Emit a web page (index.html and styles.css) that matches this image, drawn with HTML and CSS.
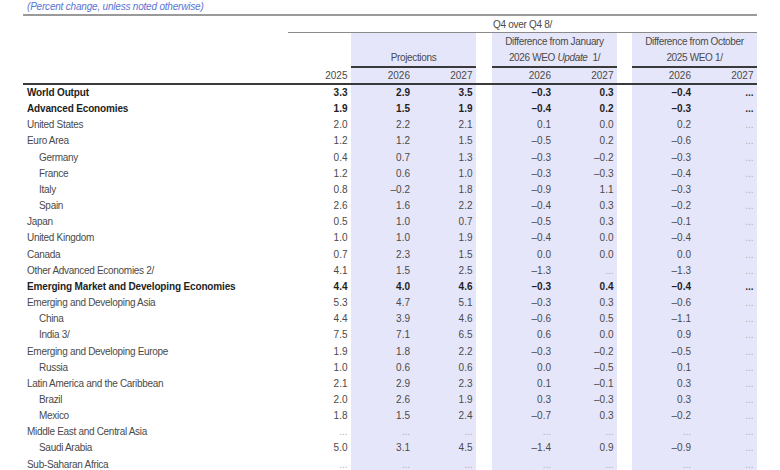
FILE: index.html
```html
<!DOCTYPE html>
<html>
<head>
<meta charset="utf-8">
<link rel="stylesheet" href="styles.css">
</head>
<body>
<div class="sheet">
  <div class="caption">(Percent change, unless noted otherwise)</div>
  <div class="grid head-q4">
    <div class="q4">Q4 over Q4 8/</div>
  </div>
  <div class="grid head-groups">
    <div></div><div></div>
    <div class="grp g1"><span>Projections</span></div>
    <div></div>
    <div class="grp g2"><span>Difference from January</span><span>2026 WEO <i>Update</i>&nbsp; 1/</span></div>
    <div></div>
    <div class="grp g3"><span>Difference from October</span><span>2025 WEO 1/</span></div>
  </div>
  <div class="grid head-years">
    <div></div><div class="n">2025</div>
    <div class="n s">2026</div><div class="n s">2027</div><div></div>
    <div class="n s">2026</div><div class="n s">2027</div><div></div>
    <div class="n s">2026</div><div class="n s">2027</div>
  </div>
  <div id="body"></div>
</div>
<script src="app.js"></script>
</body>
</html>
```
FILE: app.js
```js
const rows = [
  ["World Output", 0, 1, ["3.3","2.9","3.5","–0.3","0.3","–0.4","..."]],
  ["Advanced Economies", 0, 1, ["1.9","1.5","1.9","–0.4","0.2","–0.3","..."]],
  ["United States", 0, 0, ["2.0","2.2","2.1","0.1","0.0","0.2","..."]],
  ["Euro Area", 0, 0, ["1.2","1.2","1.5","–0.5","0.2","–0.6","..."]],
  ["Germany", 1, 0, ["0.4","0.7","1.3","–0.3","–0.2","–0.3","..."]],
  ["France", 1, 0, ["1.2","0.6","1.0","–0.3","–0.3","–0.4","..."]],
  ["Italy", 1, 0, ["0.8","–0.2","1.8","–0.9","1.1","–0.3","..."]],
  ["Spain", 1, 0, ["2.6","1.6","2.2","–0.4","0.3","–0.2","..."]],
  ["Japan", 0, 0, ["0.5","1.0","0.7","–0.5","0.3","–0.1","..."]],
  ["United Kingdom", 0, 0, ["1.0","1.0","1.9","–0.4","0.0","–0.4","..."]],
  ["Canada", 0, 0, ["0.7","2.3","1.5","0.0","0.0","0.0","..."]],
  ["Other Advanced Economies 2/", 0, 0, ["4.1","1.5","2.5","–1.3","...","–1.3","..."]],
  ["Emerging Market and Developing Economies", 0, 1, ["4.4","4.0","4.6","–0.3","0.4","–0.4","..."]],
  ["Emerging and Developing Asia", 0, 0, ["5.3","4.7","5.1","–0.3","0.3","–0.6","..."]],
  ["China", 1, 0, ["4.4","3.9","4.6","–0.6","0.5","–1.1","..."]],
  ["India 3/", 1, 0, ["7.5","7.1","6.5","0.6","0.0","0.9","..."]],
  ["Emerging and Developing Europe", 0, 0, ["1.9","1.8","2.2","–0.3","–0.2","–0.5","..."]],
  ["Russia", 1, 0, ["1.0","0.6","0.6","0.0","–0.5","0.1","..."]],
  ["Latin America and the Caribbean", 0, 0, ["2.1","2.9","2.3","0.1","–0.1","0.3","..."]],
  ["Brazil", 1, 0, ["2.0","2.6","1.9","0.3","–0.3","0.3","..."]],
  ["Mexico", 1, 0, ["1.8","1.5","2.4","–0.7","0.3","–0.2","..."]],
  ["Middle East and Central Asia", 0, 0, ["...","...","...","...","...","...","..."]],
  ["Saudi Arabia", 1, 0, ["5.0","3.1","4.5","–1.4","0.9","–0.9","..."]],
  ["Sub-Saharan Africa", 0, 0, ["...","...","...","...","...","...","..."]]
];
const body = document.getElementById("body");
const shaded = [false, true, true, true, true, true, true];
for (const [label, indent, bold, vals] of rows) {
  const r = document.createElement("div");
  r.className = "grid data" + (bold ? " bold" : "");
  const l = document.createElement("div");
  l.className = "label" + (indent ? " indent" : "");
  l.textContent = label;
  r.appendChild(l);
  vals.forEach((v, i) => {
    if (i === 3 || i === 5) r.appendChild(document.createElement("div"));
    const c = document.createElement("div");
    c.className = "n" + (shaded[i] ? " s" : "") + (v === "..." ? " na" : "");
    c.textContent = v;
    r.appendChild(c);
  });
  body.appendChild(r);
}
```
FILE: styles.css
```css
html, body {
  margin: 0;
  padding: 0;
  background: #ffffff;
}
body {
  font-family: "Liberation Sans", Arial, sans-serif;
  font-size: 10px;
  color: #4a4a4a;
}
.sheet {
  margin-left: 23px;
  width: 734px;
}
.caption {
  height: 14px;
  line-height: 14px;
  padding-left: 4px;
  font-style: italic;
  letter-spacing: -0.2px;
  color: #5a74d2;
  border-bottom: 2px solid #9a9a9a;
}
.grid {
  display: grid;
  grid-template-columns: 265px 63px 62.5px 62.5px 16px 62.5px 62.5px 15px 62.5px 62.5px;
}
.head-q4 {
  height: 17px;
}
.q4 {
  grid-column: 2 / -1;
  text-align: center;
  height: 14.5px;
  padding-top: 1.5px;
  line-height: 14.5px;
  letter-spacing: -0.3px;
  border-bottom: 1px solid #8a8a8a;
}
.head-groups {
  height: 35px;
}
.grp {
  grid-column: span 2;
  background: #e6e6fa;
  border-bottom: 2px solid #3a3a3a;
  display: flex;
  flex-direction: column;
  justify-content: flex-end;
  align-items: center;
  line-height: 16px;
  letter-spacing: -0.35px;
}
.head-years {
  height: 15px;
  border-bottom: 2px solid #3a3a3a;
  line-height: 10px;
}
.head-years > div {
  padding-top: 3px;
}
.n {
  text-align: right;
  padding-right: 3.5px;
}
.s {
  background: #e6e6fa;
}
.data {
  height: 16.17px;
  line-height: 16.17px;
}
.label {
  padding-left: 4px;
  white-space: nowrap;
  letter-spacing: -0.3px;
}
.label.indent {
  padding-left: 16px;
}
.bold {
  font-weight: bold;
  color: #1e1e1e;
}
.bold .label {
  letter-spacing: -0.15px;
}
.na {
  color: #b0b0b0;
}
.bold .na {
  color: #333333;
}
```
